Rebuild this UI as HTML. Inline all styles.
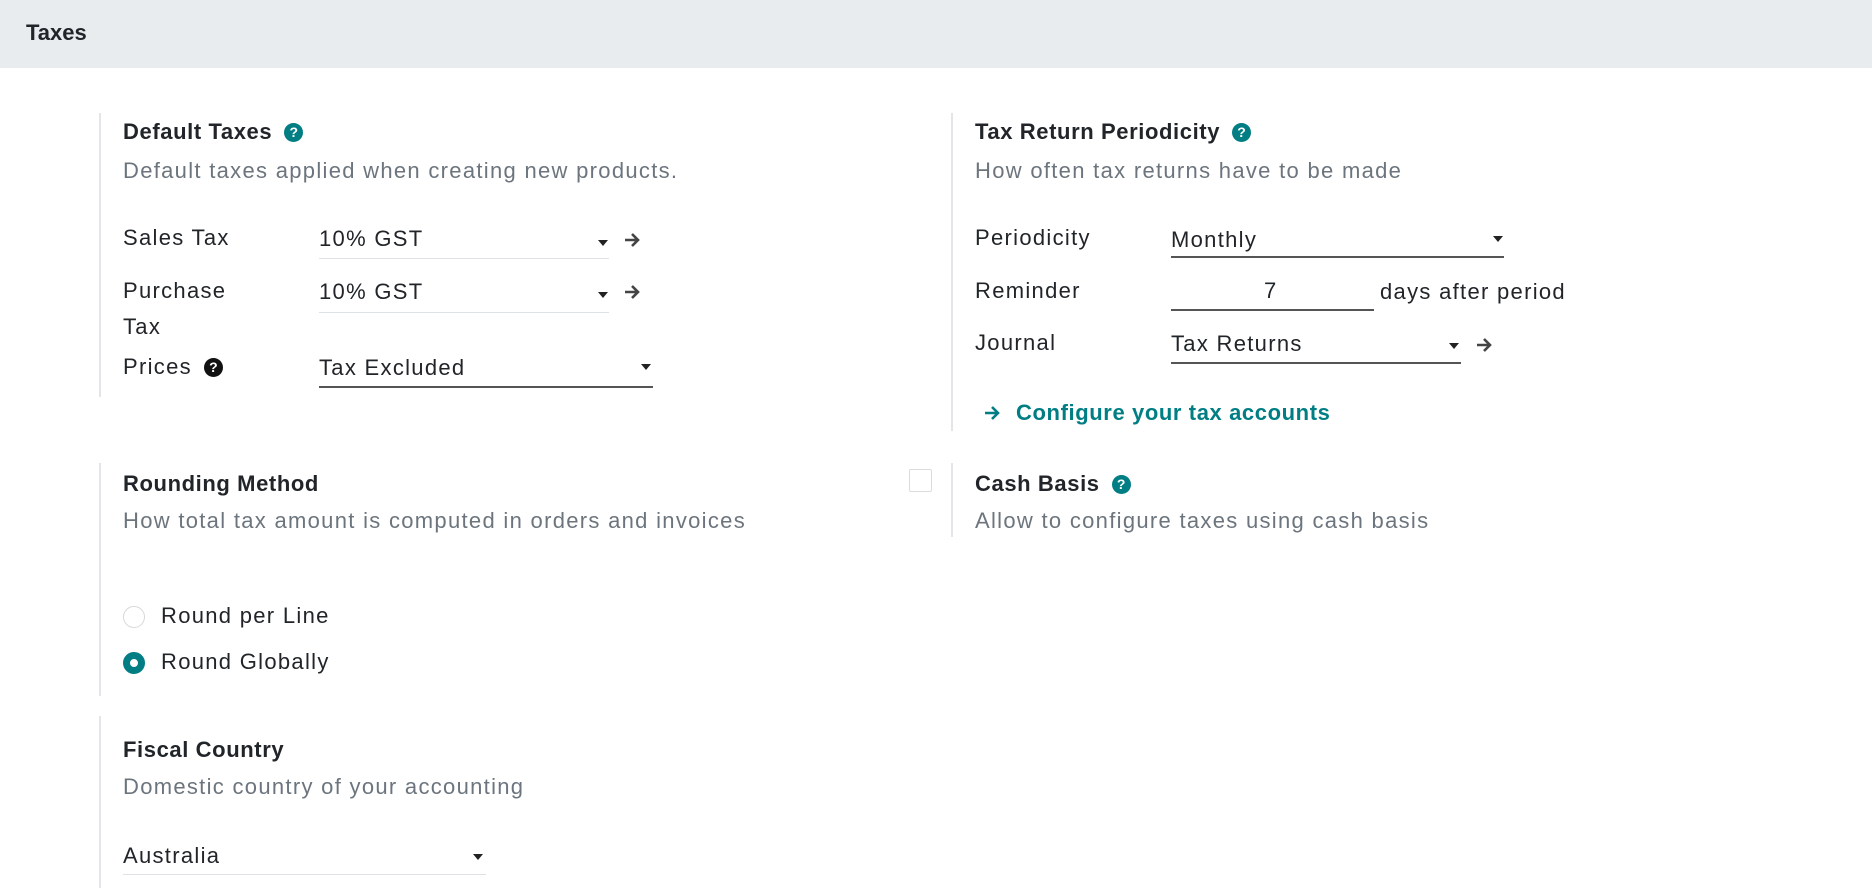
<!DOCTYPE html>
<html><head><meta charset="utf-8"><style>
*{margin:0;padding:0;box-sizing:border-box}
body{width:1872px;height:888px;overflow:hidden;background:#fff;font-family:"Liberation Sans",sans-serif;color:#212529;font-size:22px;letter-spacing:1.3px;position:relative}
.a{position:absolute;white-space:nowrap;line-height:1}
.hdr{position:absolute;left:0;top:0;width:1872px;height:68px;background:#e9ecef}
.b{font-weight:bold;color:#212529;letter-spacing:0.6px}
.g{color:#6c757d}
.vl{position:absolute;width:2px;background:#e3e5e8}
.ul{position:absolute;height:1px;background:#dee2e6}
.ulk{position:absolute;height:2px;background:#555}
.q{display:inline-block;width:19px;height:19px;border-radius:50%;background:#017e84;color:#fff;font-size:14px;text-align:center;line-height:19px;font-weight:bold;vertical-align:2px;margin-left:12px;letter-spacing:0}
.qk{background:#111}
.car{position:absolute;width:0;height:0;border-left:5px solid transparent;border-right:5px solid transparent;border-top:6px solid #222}
.arr{position:absolute}
</style></head><body>
<div class="hdr"></div>
<div class="a b" style="left:26px;top:22px;font-size:22px;letter-spacing:0">Taxes</div>

<svg width="0" height="0" style="position:absolute"><defs><symbol id="ar" viewBox="0 0 20 20"><path d="M3 10H16M10 4L16 10L10 16" fill="none" stroke="currentColor" stroke-width="2.6"/></symbol></defs></svg>

<div class="vl" style="left:99px;top:113px;height:284px"></div>
<div class="a b" style="left:123px;top:121px">Default Taxes<span class="q">?</span></div>
<div class="a g" style="left:123px;top:160px">Default taxes applied when creating new products.</div>
<div class="a" style="left:123px;top:227px">Sales Tax</div>
<div class="a" style="left:319px;top:228px">10% GST</div>
<div class="ul" style="left:319px;top:258px;width:290px"></div>
<div class="car" style="left:598px;top:240px"></div>
<svg class="arr" style="left:622px;top:230px;color:#444" width="20" height="20"><use href="#ar"/></svg>
<div class="a" style="left:123px;top:280px">Purchase</div>
<div class="a" style="left:123px;top:316px">Tax</div>
<div class="a" style="left:319px;top:281px">10% GST</div>
<div class="ul" style="left:319px;top:312px;width:290px"></div>
<div class="car" style="left:598px;top:292px"></div>
<svg class="arr" style="left:622px;top:282px;color:#444" width="20" height="20"><use href="#ar"/></svg>
<div class="a" style="left:123px;top:356px">Prices<span class="q qk">?</span></div>
<div class="a" style="left:319px;top:357px">Tax Excluded</div>
<div class="ulk" style="left:319px;top:386px;width:334px"></div>
<div class="car" style="left:641px;top:364px"></div>

<div class="vl" style="left:951px;top:113px;height:318px"></div>
<div class="a b" style="left:975px;top:121px">Tax Return Periodicity<span class="q">?</span></div>
<div class="a g" style="left:975px;top:160px">How often tax returns have to be made</div>
<div class="a" style="left:975px;top:227px">Periodicity</div>
<div class="a" style="left:1171px;top:229px">Monthly</div>
<div class="ulk" style="left:1171px;top:256px;width:333px"></div>
<div class="car" style="left:1493px;top:236px"></div>
<div class="a" style="left:975px;top:280px">Reminder</div>
<div class="a" style="left:1264px;top:280px">7</div>
<div class="ulk" style="left:1171px;top:309px;width:203px"></div>
<div class="a" style="left:1380px;top:281px">days after period</div>
<div class="a" style="left:975px;top:332px">Journal</div>
<div class="a" style="left:1171px;top:333px">Tax Returns</div>
<div class="ulk" style="left:1171px;top:362px;width:290px"></div>
<div class="car" style="left:1449px;top:343px"></div>
<svg class="arr" style="left:1474px;top:335px;color:#444" width="20" height="20"><use href="#ar"/></svg>
<svg class="arr" style="left:982px;top:403px;color:#017e84" width="20" height="20"><use href="#ar"/></svg>
<div class="a b" style="left:1016px;top:402px;color:#017e84">Configure your tax accounts</div>

<div class="a" style="left:909px;top:469px;width:23px;height:23px;border:1px solid #dcdcdc;border-radius:2px"></div>
<div class="vl" style="left:951px;top:463px;height:74px"></div>
<div class="a b" style="left:975px;top:473px">Cash Basis<span class="q">?</span></div>
<div class="a g" style="left:975px;top:510px">Allow to configure taxes using cash basis</div>

<div class="vl" style="left:99px;top:463px;height:233px"></div>
<div class="a b" style="left:123px;top:473px">Rounding Method</div>
<div class="a g" style="left:123px;top:510px">How total tax amount is computed in orders and invoices</div>
<div class="a" style="left:123px;top:606px;width:22px;height:22px;border:1px solid #d8d8d8;border-radius:50%"></div>
<div class="a" style="left:161px;top:605px">Round per Line</div>
<div class="a" style="left:123px;top:652px;width:22px;height:22px;border:7px solid #017e84;border-radius:50%"></div>
<div class="a" style="left:161px;top:651px">Round Globally</div>

<div class="vl" style="left:99px;top:716px;height:172px"></div>
<div class="a b" style="left:123px;top:739px">Fiscal Country</div>
<div class="a g" style="left:123px;top:776px">Domestic country of your accounting</div>
<div class="a" style="left:123px;top:845px">Australia</div>
<div class="ul" style="left:123px;top:874px;width:363px"></div>
<div class="car" style="left:473px;top:854px"></div>
</body></html>
